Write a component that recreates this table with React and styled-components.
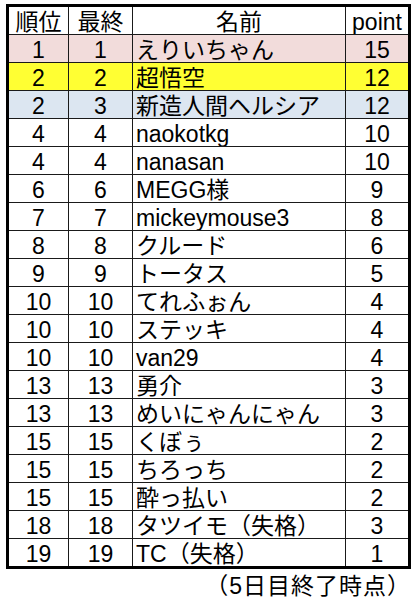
import React from 'react';
import styled, { createGlobalStyle } from 'styled-components';

const GlobalStyle = createGlobalStyle`
	* {
		box-sizing: border-box;
	}
	body {
		margin: 0;
		background: #ffffff;
		font-family: "Liberation Sans", "Noto Sans CJK JP", sans-serif;
		color: #000000;
	}
`;

const Page = styled.div`
	width: 416px;
	padding: 4px 0 0 6px;
`;

const Table = styled.table`
	width: 405px;
	table-layout: fixed;
	border-collapse: separate;
	border-spacing: 0;
	border: 3px solid #000000;
	font-size: 23px;
`;

const Row = styled.tr`
	background-color: ${({ $bg }) => $bg || '#ffffff'};

	&:last-child td {
		border-bottom: 0;
		height: 27px;
	}
`;

const Cell = styled.td`
	height: 28px;
	padding: 0 ${({ $left }) => ($left ? '3px' : '0')};
	border-right: 1px solid #1a1a1a;
	border-bottom: 1px solid #1a1a1a;
	text-align: ${({ $left }) => ($left ? 'left' : 'center')};
	vertical-align: bottom;
	line-height: 23px;
	white-space: nowrap;
	overflow: hidden;

	&:last-child {
		border-right: 0;
	}
`;

const HeadCell = styled(Cell).attrs({ as: 'th' })`
	height: 28px;
	font-weight: normal;
	text-align: center;
`;

const Note = styled.div`
	width: 405px;
	padding: 2px 0 0;
	text-align: right;
	font-size: 23px;
	letter-spacing: 1px;
	line-height: 30px;
`;

const rows = [
	[1, 1, 'えりいちゃん', 15, '#f2dcdb'],
	[2, 2, '超悟空', 12, '#ffff33'],
	[2, 3, '新造人間ヘルシア', 12, '#dce6f1'],
	[4, 4, 'naokotkg', 10],
	[4, 4, 'nanasan', 10],
	[6, 6, 'MEGG様', 9],
	[7, 7, 'mickeymouse3', 8],
	[8, 8, 'クルード', 6],
	[9, 9, 'トータス', 5],
	[10, 10, 'てれふぉん', 4],
	[10, 10, 'ステッキ', 4],
	[10, 10, 'van29', 4],
	[13, 13, '勇介', 3],
	[13, 13, 'めいにゃんにゃん', 3],
	[15, 15, 'くぼぅ', 2],
	[15, 15, 'ちろっち', 2],
	[15, 15, '酔っ払い', 2],
	[18, 18, 'タツイモ（失格）', 3],
	[19, 19, 'TC（失格）', 1],
];

export default function App() {
	return (
		<Page>
			<GlobalStyle />
			<Table>
				<colgroup>
					<col style={{ width: 60 }} />
					<col style={{ width: 64 }} />
					<col style={{ width: 213 }} />
					<col style={{ width: 62 }} />
				</colgroup>
				<thead>
					<tr>
						<HeadCell>順位</HeadCell>
						<HeadCell>最終</HeadCell>
						<HeadCell>名前</HeadCell>
						<HeadCell>point</HeadCell>
					</tr>
				</thead>
				<tbody>
					{rows.map(([rank, final, name, point, bg], i) => (
						<Row key={i} $bg={bg}>
							<Cell>{rank}</Cell>
							<Cell>{final}</Cell>
							<Cell $left>{name}</Cell>
							<Cell>{point}</Cell>
						</Row>
					))}
				</tbody>
			</Table>
			<Note>（5日目終了時点）</Note>
		</Page>
	);
}
